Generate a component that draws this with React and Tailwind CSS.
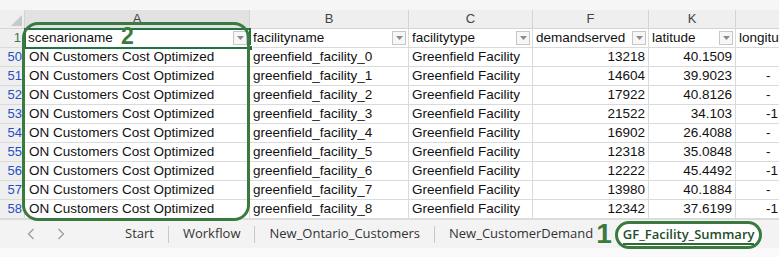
import React from 'react';

const cols = [
  { key: 'A', w: 225, title: 'scenarioname' },
  { key: 'B', w: 159, title: 'facilityname' },
  { key: 'C', w: 124, title: 'facilitytype' },
  { key: 'F', w: 116, title: 'demandserved' },
  { key: 'K', w: 87, title: 'latitude' },
  { key: '', w: 120, title: 'longitude' },
];

const rows = [
  [50, 13218, '40.1509', ''],
  [51, 14604, '39.9023', '-'],
  [52, 17922, '40.8126', '-'],
  [53, 21522, '34.103', '-1'],
  [54, 16902, '26.4088', '-'],
  [55, 12318, '35.0848', '-'],
  [56, 12222, '45.4492', '-1'],
  [57, 13980, '40.1884', '-'],
  [58, 12342, '37.6199', '-1'],
];

const tabs = ['Start', 'Workflow', 'New_Ontario_Customers', 'New_CustomerDemand'];

const FilterBtn = () => (
  <span className="absolute right-[2px] top-[2px] w-[14px] h-[14px] border border-[#c6c6c6] bg-[#f7f7f7] flex items-center justify-center">
    <svg width="7" height="4" viewBox="0 0 7 4"><path d="M0 0h7L3.5 4z" fill="#8a8a8a" /></svg>
  </span>
);

const App = () => {
  return (
    <div className="relative w-[779px] h-[257px] overflow-hidden bg-white text-[#111] font-['Liberation_Sans',sans-serif]">
      {/* top strip */}
      <div className="h-[10px] bg-[#f6f6f6]" />

      {/* column letters */}
      <div className="flex h-[19px] bg-[#efefef] border-b border-[#d4d4d4] text-[13px] text-[#444]">
        <div className="w-[25px] shrink-0 relative border-r border-[#d4d4d4]">
          <svg className="absolute right-[2px] bottom-[2px]" width="11" height="11" viewBox="0 0 11 11"><path d="M11 0v11H0z" fill="#c8c8c8" /></svg>
        </div>
        {cols.map((c) => (
          <div
            key={c.title}
            style={{ width: c.w }}
            className={`shrink-0 flex items-center justify-center border-r border-[#d4d4d4] ${c.key === 'A' ? 'bg-[#e2e2e2]' : ''}`}
          >
            {c.key}
          </div>
        ))}
      </div>

      {/* header row */}
      <div className="flex h-[19px] border-b border-[#dadada] text-[13.5px]">
        <div className="w-[25px] shrink-0 bg-[#efefef] border-r border-[#d4d4d4] flex items-center justify-end pr-[3px] text-[13px] text-[#3b7a4e]">1</div>
        {cols.map((c) => (
          <div key={c.title} style={{ width: c.w }} className="shrink-0 relative border-r border-[#dadada] pl-[3px] flex items-center whitespace-nowrap">
            {c.title}
            {c.key !== '' && <FilterBtn />}
          </div>
        ))}
      </div>

      {/* data rows */}
      {rows.map(([n, demand, lat, lon], i) => (
        <div key={n} className="flex h-[19px] border-b border-[#dadada] text-[13.5px]">
          <div className="w-[25px] shrink-0 bg-[#efefef] border-r border-[#d4d4d4] flex items-center justify-end pr-[2px] text-[13px] text-[#2650c4]">{n}</div>
          <div className="w-[225px] shrink-0 border-r border-[#dadada] pl-[4px] flex items-center whitespace-nowrap">ON Customers Cost Optimized</div>
          <div className="w-[159px] shrink-0 border-r border-[#dadada] pl-[3px] flex items-center whitespace-nowrap">greenfield_facility_{i}</div>
          <div className="w-[124px] shrink-0 border-r border-[#dadada] pl-[3px] flex items-center whitespace-nowrap">Greenfield Facility</div>
          <div className="w-[116px] shrink-0 border-r border-[#dadada] pr-[3px] flex items-center justify-end">{demand}</div>
          <div className="w-[87px] shrink-0 border-r border-[#dadada] pr-[3px] flex items-center justify-end">{lat}</div>
          <div className="w-[120px] shrink-0 pl-[30px] flex items-center whitespace-nowrap">{lon}</div>
        </div>
      ))}

      {/* sheet tabs */}
      <div className="flex items-center h-[29px] bg-[#f3f3f3] border-t border-[#dcdcdc] text-[13px] text-[#333] font-['Open_Sans',sans-serif]">
        <div className="w-[111px] shrink-0 flex items-center gap-[22px] pl-[27px]">
          <svg width="8" height="12" viewBox="0 0 8 12"><path d="M6.5 1 1.5 6l5 5" fill="none" stroke="#9a9a9a" strokeWidth="1.2" /></svg>
          <svg width="8" height="12" viewBox="0 0 8 12"><path d="M1.5 1l5 5-5 5" fill="none" stroke="#9a9a9a" strokeWidth="1.2" /></svg>
        </div>
        {tabs.map((t, i) => (
          <div key={t} className="flex items-center">
            <span className="px-[14px]">{t}</span>
            {i < tabs.length - 1 && <span className="w-px h-[17px] bg-[#c8c8c8]" />}
          </div>
        ))}
        <span className="text-[28px] leading-none font-bold text-[#3b7a3e] -ml-[11px] mr-[3px] font-['Liberation_Sans',sans-serif]">1</span>
        <div className="h-[28px] mt-[2px] px-[5px] flex items-center rounded-[14px] border-[3px] border-[#3b7a3e] bg-white">
          <span className="font-semibold text-[#1f4f2a] border-b-2 border-[#2f6b3a] leading-[18px]">GF_Facility_Summary</span>
        </div>
      </div>
      <div className="h-[10px] bg-[#fafafa]" />

      {/* A1 selection */}
      <div className="absolute left-[24px] top-[28px] w-[227px] h-[21px] border-2 border-[#217346]" />
      <div className="absolute left-[247px] top-[45px] w-[6px] h-[6px] bg-[#217346] border border-white" />

      {/* annotation 2 */}
      <div className="absolute left-[22px] top-[22px] w-[228px] h-[199px] rounded-[16px] border-[3px] border-[#3b7a3e]" />
      <span className="absolute left-[121px] top-[25px] text-[23px] font-bold leading-none text-[#3b7a3e]">2</span>
    </div>
  );
};

export default App;
